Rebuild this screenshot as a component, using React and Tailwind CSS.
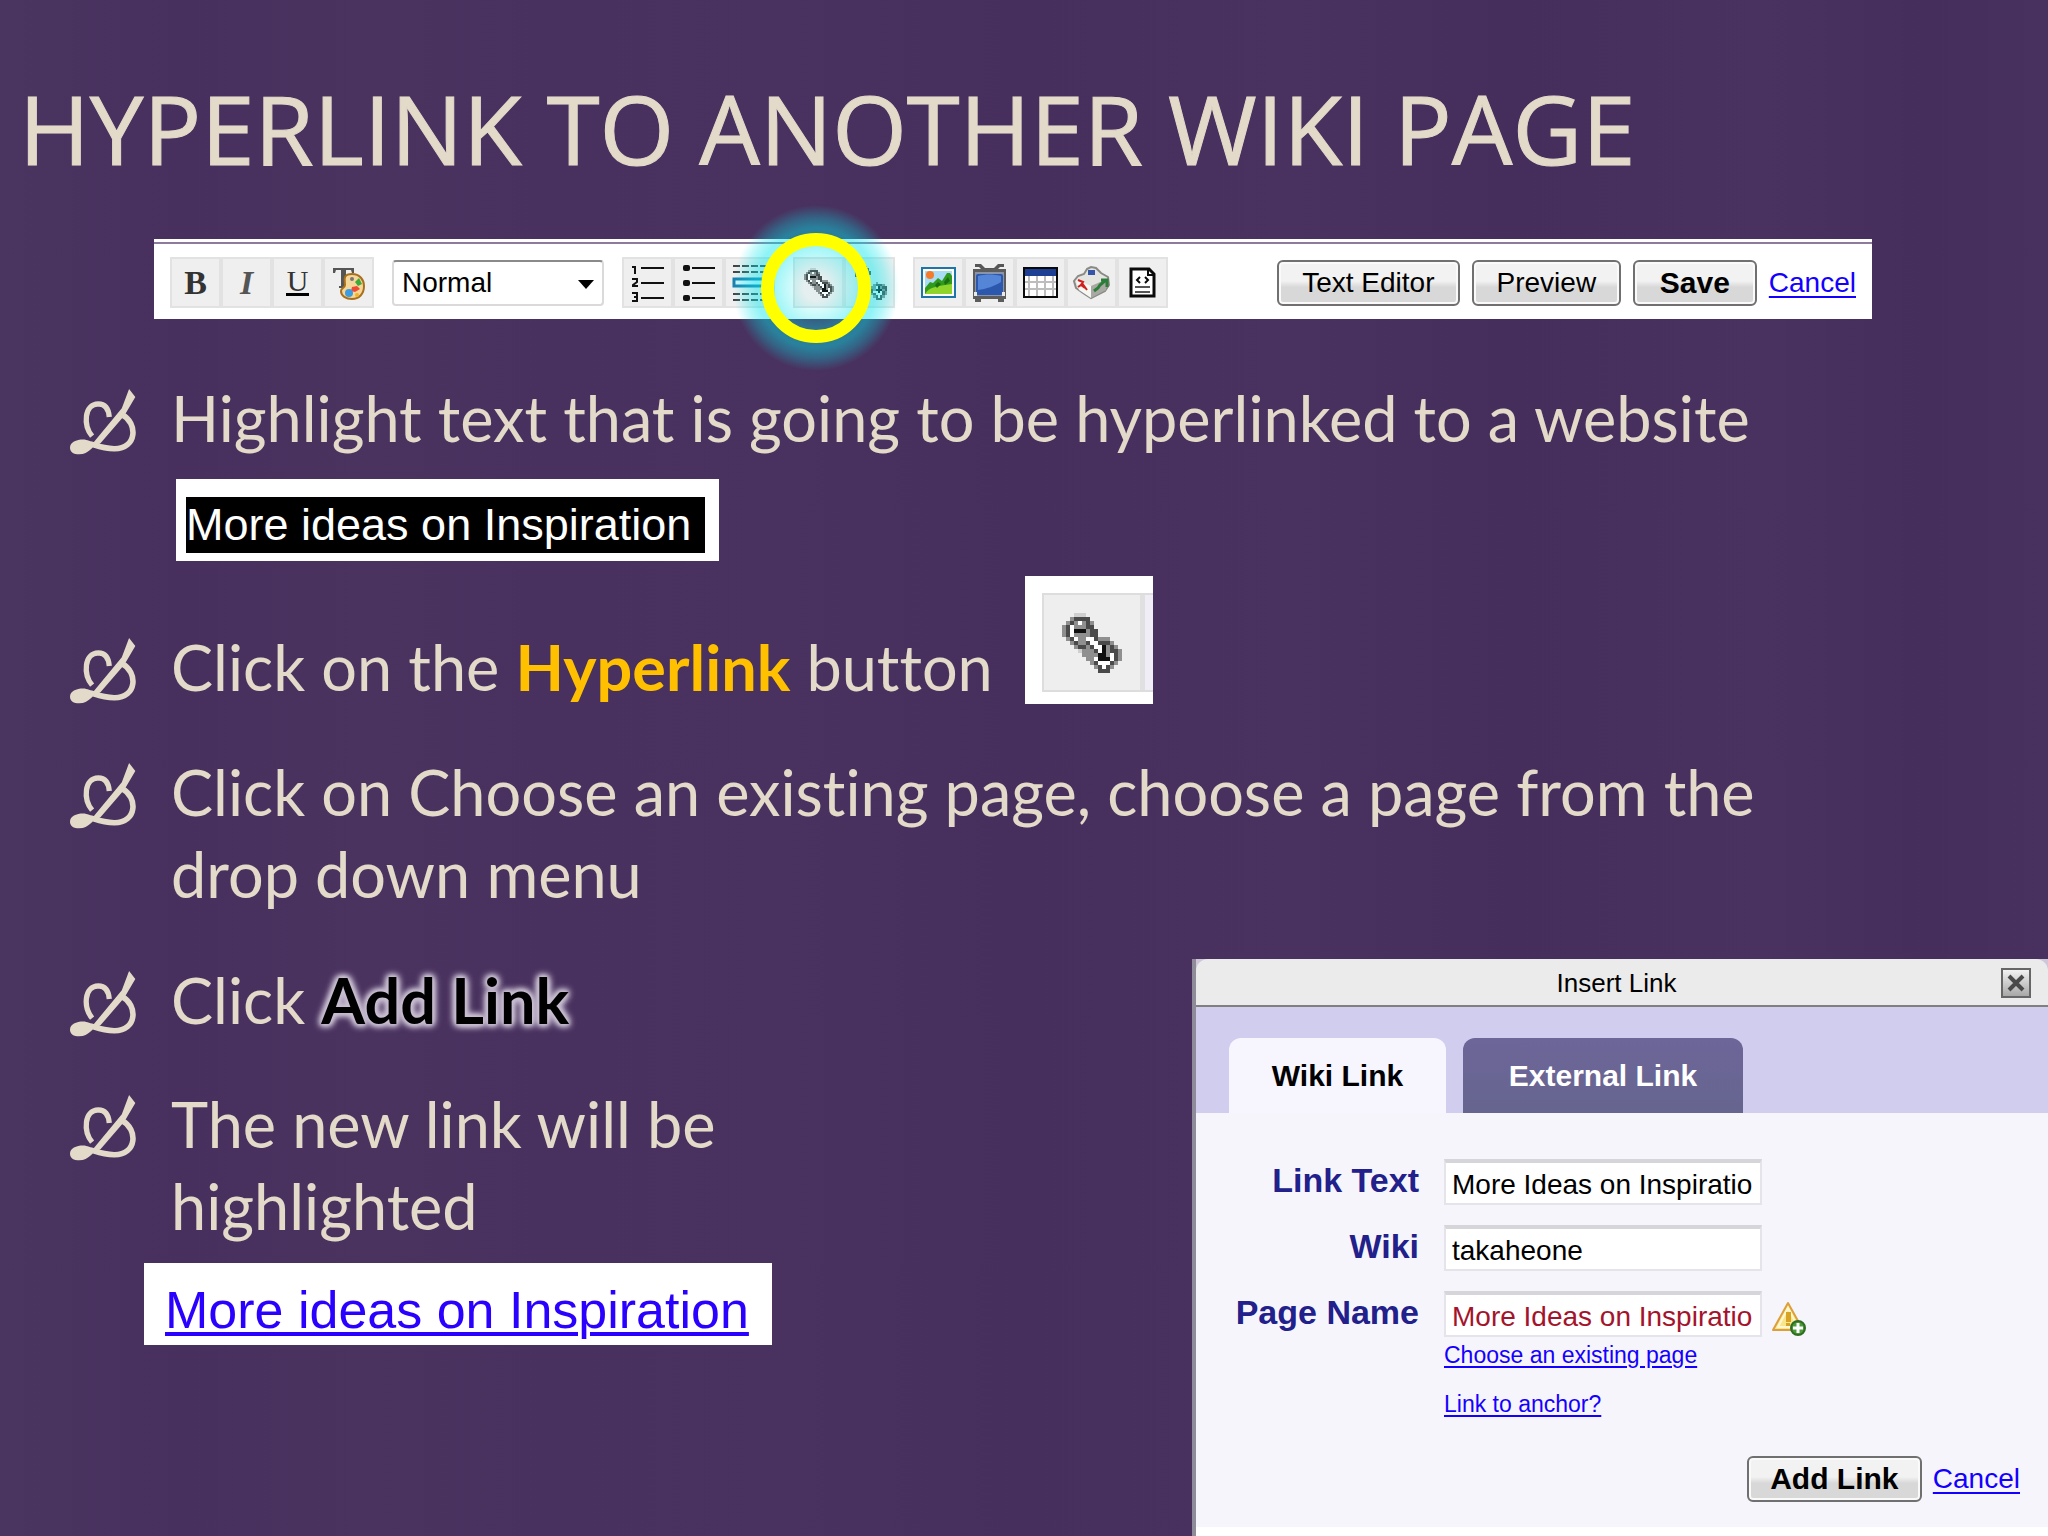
import { useState } from "react";

const CHAIN = [
  "...lll.........",
  "..gdddd........",
  ".gdgwgdg.......",
  "gdwgggdd.......",
  "gdwkkkgdd......",
  "gdwggggdd......",
  ".gdwggwwdggg...",
  "..gdggdwwdddg..",
  "...gddgdwwkgdg.",
  "....lgggdwkgddg",
  ".....ggggkkgwdg",
  "......ggwkkkwdg",
  ".......gdwwwdg.",
  "........gdwdg..",
  ".........ddd...",
];

const BROKEN_CHAIN = [
  "...ddd.........",
  "..dgwgd........",
  ".dgwkkgd.......",
  ".dwkggdd.......",
  ".dgwggd........",
  "..dgd..........",
  "...............",
  "..........g....",
  ".........gdddg.",
  "........ggwkgdd",
  "........dgkkkgd",
  "........dwwkwdg",
  "........gdwwwdg",
  ".........gdwdg.",
  "..........ddd..",
];

const PIXELS = { l: "#cfcfcf", g: "#8f8f8f", d: "#4a4a4a", k: "#101010", w: "#ffffff" };

function PixelIcon({ rows, className }) {
  return (
    <svg viewBox="0 0 15 15" className={className} shapeRendering="crispEdges" aria-hidden="true">
      {rows.map((row, y) =>
        row.split("").map((c, x) =>
          c === "." ? null : <rect key={`${x}-${y}`} x={x} y={y} width="1" height="1" fill={PIXELS[c]} />
        )
      )}
    </svg>
  );
}

function PaletteIcon() {
  return (
    <svg width="34" height="34" viewBox="0 0 34 34" aria-hidden="true">
      <path d="M1 2h21v5h-2l-1-3h-5v16h2v2H7v-2h2V4H4L3 7H1z" fill="#555" />
      <path d="M20 8c8 0 12 6 12 12 0 8-5 13-12 13-6 0-11-3-11-8 0-3 4-3 4-6 0-4-3-11 7-11z" fill="#f6d79a" stroke="#a8701c" strokeWidth="2" />
      <circle cx="20" cy="13" r="2" fill="#777" />
      <path d="M23 16l4-4 3 6-4 2z" fill="#3faa3c" />
      <path d="M20 21l5-1 3 3-5 3-4-1z" fill="#ee4b35" />
      <circle cx="17" cy="27" r="4" fill="#3d9be0" />
      <circle cx="25" cy="29" r="2" fill="#f0b429" />
    </svg>
  );
}

function NumberedIcon() {
  return (
    <svg width="34" height="38" viewBox="0 0 34 38" fill="none" stroke="#111" strokeWidth="2" aria-hidden="true">
      <path d="M10 4h23M10 19h23M10 34h23" />
      <path d="M1 3h3v7M1 15h5v3L2 21v1h5M1 29h5v4H3h3v4H1" />
    </svg>
  );
}

function BulletedIcon() {
  return (
    <svg width="34" height="38" viewBox="0 0 34 38" aria-hidden="true">
      <path d="M10 4h23M10 19h23M10 34h23" stroke="#111" strokeWidth="2" />
      <g fill="#111">
        <rect x="1" y="1" width="7" height="6" rx="2" />
        <rect x="1" y="16" width="7" height="6" rx="2" />
        <rect x="1" y="31" width="7" height="6" rx="2" />
      </g>
    </svg>
  );
}

function RuleIcon() {
  return (
    <svg width="36" height="38" viewBox="0 0 36 38" fill="none" aria-hidden="true">
      <path d="M1 2h34M1 8h34M1 30h34M1 36h34" stroke="#444" strokeWidth="2" strokeDasharray="7 2" />
      <rect x="2" y="15" width="32" height="7" fill="#d6f6ff" stroke="#1a7fae" strokeWidth="3" />
    </svg>
  );
}

function PictureIcon() {
  return (
    <svg width="35" height="31" viewBox="0 0 35 31" aria-hidden="true">
      <rect x="1" y="1" width="33" height="29" fill="#fff" stroke="#1c76a8" strokeWidth="2" />
      <rect x="4" y="4" width="27" height="23" fill="#a9dcf5" />
      <path d="M4 21l5-6 3 1 5-5 4 3 5-8h3l2 3v18H4z" fill="#2f9a1c" />
      <path d="M4 27c4-7 12-8 27-10v10z" fill="#8ed42a" />
      <path d="M17 15l3 2-4 4-2-3zM27 10l2 4-5 4-1-3z" fill="#1b6f12" />
      <circle cx="9" cy="8" r="4" fill="#f47b2a" />
    </svg>
  );
}

function TvIcon() {
  return (
    <svg width="35" height="39" viewBox="0 0 35 39" aria-hidden="true">
      <path d="M3 1h6l4 4h9l4-4h6v3h-4l-4 4H11L7 4H3z" fill="#565656" />
      <path d="M1 6h33v30h-2v3h-6v-3H9v3H3v-3H1z" fill="#5c5c5c" />
      <rect x="3" y="9" width="29" height="24" fill="#8a94a8" />
      <rect x="4" y="11" width="27" height="21" rx="2" fill="#2b57ad" />
      <path d="M6 13c8-2 15-2 23 0v6c-6 4-15 7-23 8z" fill="#5585d6" />
      <path d="M2 29h3v4H2zM30 29h3v4h-3z" fill="#e9e9e9" />
    </svg>
  );
}

function TableIcon() {
  return (
    <svg width="35" height="31" viewBox="0 0 35 31" aria-hidden="true">
      <rect width="35" height="31" fill="#0a0a0a" />
      <rect x="2" y="2" width="31" height="7" fill="#1c3f94" />
      <rect x="2" y="9" width="31" height="20" fill="#fff" />
      <path d="M2 15h31M2 22h31M6 9v20M14 9v20M22 9v20M30 9v20" stroke="#bdbdbd" strokeWidth="2" />
    </svg>
  );
}

function WidgetIcon() {
  return (
    <svg width="37" height="34" viewBox="0 0 37 34" aria-hidden="true">
      <path d="M14 3l4-2 5 1 5 5 7 4 1 8-4 6-14 7-8-5-7-5-2-7 4-5 6-2z" fill="#e4e4e0" stroke="#8a8a86" strokeWidth="2" />
      <path d="M3 14l15 6v12L6 24z" fill="#f7f7f4" />
      <path d="M18 20l16-7-1 11-15 8z" fill="#a9a9a3" />
      <rect x="15" y="4" width="7" height="5" fill="#3556a8" />
      <path d="M5 14l5 2-3 4M9 17l5 7M5 21l3-2 4 3" stroke="#cf2020" strokeWidth="2" fill="none" />
      <path d="M21 25l4-3 2-3 6-5M28 14h6v7" stroke="#2d7d3a" strokeWidth="3" fill="none" />
    </svg>
  );
}

function SourceIcon() {
  return (
    <svg width="27" height="31" viewBox="0 0 27 31" fill="none" aria-hidden="true">
      <path d="M2 2h18l5 5v22H2z" fill="#fff" stroke="#0a0a0a" strokeWidth="3" />
      <path d="M19 2v6h6" stroke="#0a0a0a" strokeWidth="2" />
      <path d="M11 10l-3 3 3 3M16 10l3 3-3 3" stroke="#0a0a0a" strokeWidth="2" />
      <path d="M6 20h15M6 25h15" stroke="#555" strokeWidth="2" />
    </svg>
  );
}

function WarningIcon() {
  return (
    <svg width="36" height="36" viewBox="0 0 36 36" className="mt-2.5" aria-hidden="true">
      <path d="M17 2L32 29H2z" fill="#fbe58a" stroke="#dd9e3c" strokeWidth="2" strokeLinejoin="round" />
      <path d="M17 7L27 26H7z" fill="none" stroke="#fff8d0" strokeWidth="2" />
      <path d="M15 11h5v10h-5zM15 22h4v3h-4z" fill="#d8a224" />
      <circle cx="27" cy="27" r="7" fill="#4c9a3a" stroke="#2f6d22" strokeWidth="2" />
      <path d="M27 22v10M22 27h10" stroke="#fff" strokeWidth="3" />
    </svg>
  );
}

function Flourish() {
  return (
    <svg viewBox="28 28 200 200" className="mt-3 size-[66px] shrink-0" aria-hidden="true">
      <path d="M207 28l19 24-33 56-72 84-12 8-14-4 6-8 84-102z" fill="#e3dac9" />
      <path d="M28 206c0-17 19-25 40-25 15 0 24 10 46 7l-4 12c-16-1-22 26-54 26-17 0-28-7-28-20z" fill="#e3dac9" />
      <path d="M95 171C68 138 70 74 114 73c20 0 31 14 33 40" fill="none" stroke="#e3dac9" strokeWidth="16" />
      <path d="M186 106c48 24 46 104-24 103-25 0-42-5-62-12" fill="none" stroke="#e3dac9" strokeWidth="17" />
    </svg>
  );
}

function ToolGroup({ children }) {
  return <div className="relative flex shrink-0">{children}</div>;
}

function Tool({ label, children }) {
  return (
    <button
      type="button"
      aria-label={label}
      className="flex size-[51px] items-center justify-center border-2 border-[#e2e2e2] bg-[#efefef] font-['Liberation_Serif',serif] text-[34px] leading-none text-[#333]"
    >
      {children}
    </button>
  );
}

function PushButton({ bold, className, children }) {
  return (
    <button
      type="button"
      className={`h-[46px] shrink-0 rounded-md border-2 border-[#707070] bg-linear-to-b from-[#f2f2f2] from-45% to-[#d8d8d8] to-60% text-black shadow-[inset_0_0_0_2px_#fafafa] ${
        bold ? "text-[30px] leading-[40px] font-bold" : "text-[28px]"
      } ${className}`}
    >
      {children}
    </button>
  );
}

function EditorToolbar() {
  const [format, setFormat] = useState("Normal");

  return (
    <div className="mr-44 ml-[154px] bg-white pt-[3px] font-['Liberation_Sans',sans-serif]">
      <div className="flex items-center gap-[18px] border-t-2 border-[#8d7a9c] px-4 pt-[13px] pb-[11px]">
        <ToolGroup>
          <Tool label="Bold"><b>B</b></Tool>
          <Tool label="Italic"><i className="font-bold text-[#555]">I</i></Tool>
          <Tool label="Underline"><span className="border-b-3 border-black px-px text-[30px] leading-[24px]">U</span></Tool>
          <Tool label="Text colour"><PaletteIcon /></Tool>
        </ToolGroup>

        <div className="relative shrink-0">
          <select
            aria-label="Paragraph format"
            value={format}
            onChange={(e) => setFormat(e.target.value)}
            className="h-[46px] w-[212px] appearance-none rounded-sm border-2 border-t-[#8a8a8a] border-x-[#dadada] border-b-[#dadada] bg-white pl-2 text-[28px] text-black"
          >
            <option>Normal</option>
            <option>Heading 1</option>
            <option>Heading 2</option>
          </select>
          <svg width="16" height="10" viewBox="0 0 16 10" className="pointer-events-none absolute top-5 right-2.5" aria-hidden="true">
            <path d="M0 0h16L8 9z" fill="#000" />
          </svg>
        </div>

        <ToolGroup>
          <Tool label="Numbered list"><NumberedIcon /></Tool>
          <Tool label="Bulleted list"><BulletedIcon /></Tool>
          <Tool label="Horizontal rule"><RuleIcon /></Tool>
        </ToolGroup>

        <ToolGroup>
          <Tool label="Insert link"><PixelIcon rows={CHAIN} className="size-[30px]" /></Tool>
          <Tool label="Remove link"><PixelIcon rows={BROKEN_CHAIN} className="size-[34px]" /></Tool>
          {/* glow and ring calling out the link button */}
          <span className="pointer-events-none absolute -top-[67px] -left-[75px] flex size-[196px] items-center justify-center rounded-full bg-[radial-gradient(circle,rgba(0,230,235,0.04)_12px,rgba(0,230,235,0.42)_46px,rgba(0,230,235,0.44)_60px,rgba(0,230,235,0.28)_70px,rgba(0,230,235,0)_83px)]">
            <span className="size-[110px] rounded-full border-[13px] border-[#ffff00]" />
          </span>
        </ToolGroup>

        <ToolGroup>
          <Tool label="Insert image"><PictureIcon /></Tool>
          <Tool label="Insert video"><TvIcon /></Tool>
          <Tool label="Insert table"><TableIcon /></Tool>
          <Tool label="Insert widget"><WidgetIcon /></Tool>
          <Tool label="Edit source"><SourceIcon /></Tool>
        </ToolGroup>

        <div className="ml-auto flex items-center gap-3">
          <PushButton className="w-[183px]">Text Editor</PushButton>
          <PushButton className="w-[149px]">Preview</PushButton>
          <PushButton bold className="w-[124px]">Save</PushButton>
          <a href="#cancel" className="text-[28px] text-[#1400ff] underline underline-offset-4">Cancel</a>
        </div>
      </div>
    </div>
  );
}

function Step({ className, children }) {
  return (
    <li className={`flex gap-[35px] pl-[70px] ${className || ""}`}>
      <Flourish />
      <div>{children}</div>
    </li>
  );
}

function Field({ id, label, value, tone, children }) {
  return (
    <>
      <label htmlFor={id} className="h-[46px] text-right text-[34px] leading-[42px] font-bold text-[#22208a]">{label}</label>
      <div className="flex h-[46px] items-center gap-[9px]">
        <input
          id={id}
          defaultValue={value}
          className={`h-[46px] w-[318px] border-2 border-t-4 border-[#e4e4ea] border-t-[#d6d6da] bg-white pt-1 pl-1.5 text-[28px] ${tone || "text-black"}`}
        />
        {children}
      </div>
    </>
  );
}

function InsertLinkDialog() {
  return (
    <section aria-labelledby="dialog-title" className="flex flex-col border-l-4 border-[#8f8b98] bg-[#cfc6da] font-['Liberation_Sans',sans-serif] text-black">
      <header className="flex h-12 items-center rounded-t-xl border-b-2 border-[#808080] bg-[#ebebeb] pt-0.5 pr-[17px] pl-9">
        <h2 id="dialog-title" className="flex-1 text-center text-[26px]">Insert Link</h2>
        <button type="button" aria-label="Close" className="flex size-[30px] items-center justify-center border-2 border-[#666] bg-linear-to-b from-[#f2f2f2] to-[#a8a8a8]">
          <svg width="18" height="18" viewBox="0 0 18 18" aria-hidden="true">
            <path d="M2 2l14 14M16 2L2 16" stroke="#4a4a4a" strokeWidth="4" />
          </svg>
        </button>
      </header>

      <div role="tablist" className="flex h-[106px] items-end gap-[17px] bg-[#d0cdee] pl-[33px] text-[30px] font-bold">
        <button type="button" role="tab" aria-selected="true" className="h-[75px] w-[217px] rounded-t-xl bg-[#f7f5fd]">Wiki Link</button>
        <button type="button" role="tab" aria-selected="false" className="h-[75px] w-[280px] rounded-t-xl bg-linear-to-b from-[#6d6699] to-[#66658f] text-white">External Link</button>
      </div>

      <form className="flex flex-1 flex-col bg-[#f6f5fc] pt-[46px]" onSubmit={(e) => e.preventDefault()}>
        <div className="grid grid-cols-[223px_1fr] gap-x-[25px] gap-y-[20px]">
          <Field id="link-text" label="Link Text" value="More Ideas on Inspiratio" />
          <Field id="wiki" label="Wiki" value="takaheone" />
          <Field id="page-name" label="Page Name" value="More Ideas on Inspiratio" tone="text-[#a3142c]">
            <WarningIcon />
          </Field>
        </div>
        <div className="mt-1 ml-[248px] flex flex-col items-start gap-[21px] text-[23px] leading-7 text-[#1400ff]">
          <a href="#existing" className="underline underline-offset-3">Choose an existing page</a>
          <a href="#anchor" className="underline underline-offset-3">Link to anchor?</a>
        </div>
        <div className="mt-[38px] mb-6 flex items-center justify-end gap-[11px] pr-[28px]">
          <PushButton bold className="w-[175px]">Add Link</PushButton>
          <a href="#cancel-link" className="text-[28px] text-[#1400ff] underline underline-offset-4">Cancel</a>
        </div>
        <div className="mt-auto h-[9px] bg-white" />
      </form>
    </section>
  );
}

export default function App() {
  return (
    <main className="flex min-h-screen flex-col bg-[#48315e] bg-[linear-gradient(90deg,#4a3460_0%,#47305d_9%,#4a335f_18%,#48315e_27%,#49325f_38%,#472f5d_50%,#49325f_63%,#462e5c_74%,#49325f_86%,#462e5c_94%,#48315e_100%)] text-[#e3dac9]">
      <h1 className="pt-20 pb-[63px] pl-[19px] font-['Open_Sans',sans-serif] text-[96px] leading-[96px] [-webkit-text-stroke:1px_#e3dac9]">
        HYPERLINK TO ANOTHER WIKI PAGE
      </h1>

      <EditorToolbar />

      <ul className="mt-[58px] pr-48 font-['Lato',sans-serif] text-[63px] leading-[82px] [font-variant-ligatures:none]">
        <Step>
          Highlight text that is going to be hyperlinked to a website
          <div className="mt-5 ml-[5px] w-fit bg-white pt-[18px] pr-3.5 pb-2 pl-2.5">
            <div className="bg-black pr-3.5 font-['Liberation_Sans',sans-serif] text-[45px] leading-[56px] text-white">More ideas on Inspiration</div>
          </div>
        </Step>
        <li className="mt-[15px] flex items-end pl-[70px]">
          <div className="flex gap-[35px]">
            <Flourish />
            <span>Click on the <b className="text-[#ffc000]">Hyperlink</b> button</span>
          </div>
          <div className="mb-1 ml-8 size-32 bg-white pt-[17px] pl-[17px]">
            <div className="flex h-[99px] items-center border-2 border-r-0 border-[#dddddd] bg-[#eeeeee]">
              <PixelIcon rows={CHAIN} className="ml-[18px] size-[60px]" />
              <span className="ml-auto h-full w-[13px] border-l-[5px] border-[#e0e0e0] bg-[#f1edf6]" />
            </div>
          </div>
        </li>
        <Step className="mt-[43px]">
          Click on Choose an existing page, choose a page from the drop down menu
        </Step>
      </ul>

      <div className="mt-11 grid flex-1 grid-cols-[1fr_856px]">
        <div className="font-['Lato',sans-serif] text-[63px] leading-[82px] [font-variant-ligatures:none]">
          <ul>
            <Step>
              Click{" "}
              <b className="text-black [text-shadow:0_0_3px_#c9bfd2,0_0_4px_#c9bfd2,0_0_6px_#c9bfd2,0_0_7px_#c9bfd2,0_0_8px_#c9bfd2,0_0_9px_#c9bfd2,0_0_10px_#c9bfd2]">Add Link</b>
            </Step>
            <Step className="mt-[42px] max-w-[760px]">The new link will be highlighted</Step>
          </ul>
          <div className="mt-4 ml-36 w-fit bg-white pt-[18px] pr-[23px] pb-1.5 pl-[21px] font-['Liberation_Sans',sans-serif] text-[52px] leading-[58px]">
            <a href="#inspiration" className="text-[#2a00ff] underline decoration-4 underline-offset-4">More ideas on Inspiration</a>
          </div>
        </div>
        <InsertLinkDialog />
      </div>
    </main>
  );
}
